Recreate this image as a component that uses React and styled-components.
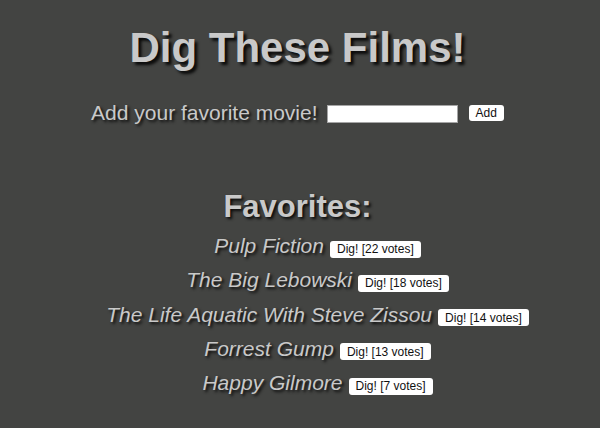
import React, { useState } from "react";
import styled, { createGlobalStyle } from "styled-components";

const GlobalStyle = createGlobalStyle`
  html, body {
    margin: 0;
    background: #434442;
  }
  body {
    font-family: "Liberation Sans", Arial, sans-serif;
  }
`;

const Page = styled.div`
  padding: 24px 5px 0 0;
  text-align: center;
  color: #c9c9c9;
  text-shadow: 2px 2px 3px rgba(0, 0, 0, 0.85);
`;

const Title = styled.h1`
  margin: 0;
  font-size: 42px;
  line-height: 48px;
  font-weight: bold;
  text-shadow: 3px 3px 3px rgba(0, 0, 0, 0.85);
`;

const AddForm = styled.form`
  margin-top: 29px;
  display: flex;
  justify-content: center;
  align-items: center;
  height: 24px;
`;

const Prompt = styled.label`
  font-size: 21px;
  line-height: 24px;
  margin-right: 9px;
`;

const Input = styled.input`
  box-sizing: border-box;
  width: 131px;
  height: 18px;
  margin: 2px 11px 0 0;
  padding: 0 3px;
  border: 1px solid #a5a5a5;
  background: #fff;
  outline: none;
`;

const SmallButton = styled.button`
  box-sizing: border-box;
  height: ${(p) => p.$h || 16}px;
  padding: 0 ${(p) => p.$px || 7}px;
  border: none;
  border-radius: 3px;
  background: #fff;
  color: #111;
  font-family: "Liberation Sans", Arial, sans-serif;
  font-size: 12px;
  text-shadow: none;
  cursor: pointer;
`;

const Heading = styled.h2`
  margin: 65px 0 0;
  font-size: 31px;
  line-height: 34px;
  font-weight: bold;
`;

const List = styled.ul`
  list-style: none;
  margin: 5px 0 0;
  padding: 0 0 0 40px;
`;

const Item = styled.li`
  height: 34.3px;
  line-height: 34px;
  font-size: 21px;
`;

const Name = styled.span`
  font-style: italic;
  margin-right: 6px;
`;

const initial = [
  { name: "Pulp Fiction", votes: 22 },
  { name: "The Big Lebowski", votes: 18 },
  { name: "The Life Aquatic With Steve Zissou", votes: 14 },
  { name: "Forrest Gump", votes: 13 },
  { name: "Happy Gilmore", votes: 7 },
];

export default function App() {
  const [films, setFilms] = useState(initial);
  const [text, setText] = useState("");

  const add = (e) => {
    e.preventDefault();
    if (!text.trim()) return;
    setFilms([...films, { name: text.trim(), votes: 0 }]);
    setText("");
  };

  const dig = (i) =>
    setFilms(films.map((f, j) => (j === i ? { ...f, votes: f.votes + 1 } : f)));

  return (
    <>
      <GlobalStyle />
      <Page>
        <Title>Dig These Films!</Title>
        <AddForm onSubmit={add}>
          <Prompt>Add your favorite movie!</Prompt>
          <Input value={text} onChange={(e) => setText(e.target.value)} />
          <SmallButton type="submit" $px={7}>
            Add
          </SmallButton>
        </AddForm>
        <Heading>Favorites:</Heading>
        <List>
          {films.map((f, i) => (
            <Item key={f.name}>
              <Name>{f.name}</Name>
              <SmallButton $h={17} $px={7} onClick={() => dig(i)}>
                Dig! [{f.votes} votes]
              </SmallButton>
            </Item>
          ))}
        </List>
      </Page>
    </>
  );
}
